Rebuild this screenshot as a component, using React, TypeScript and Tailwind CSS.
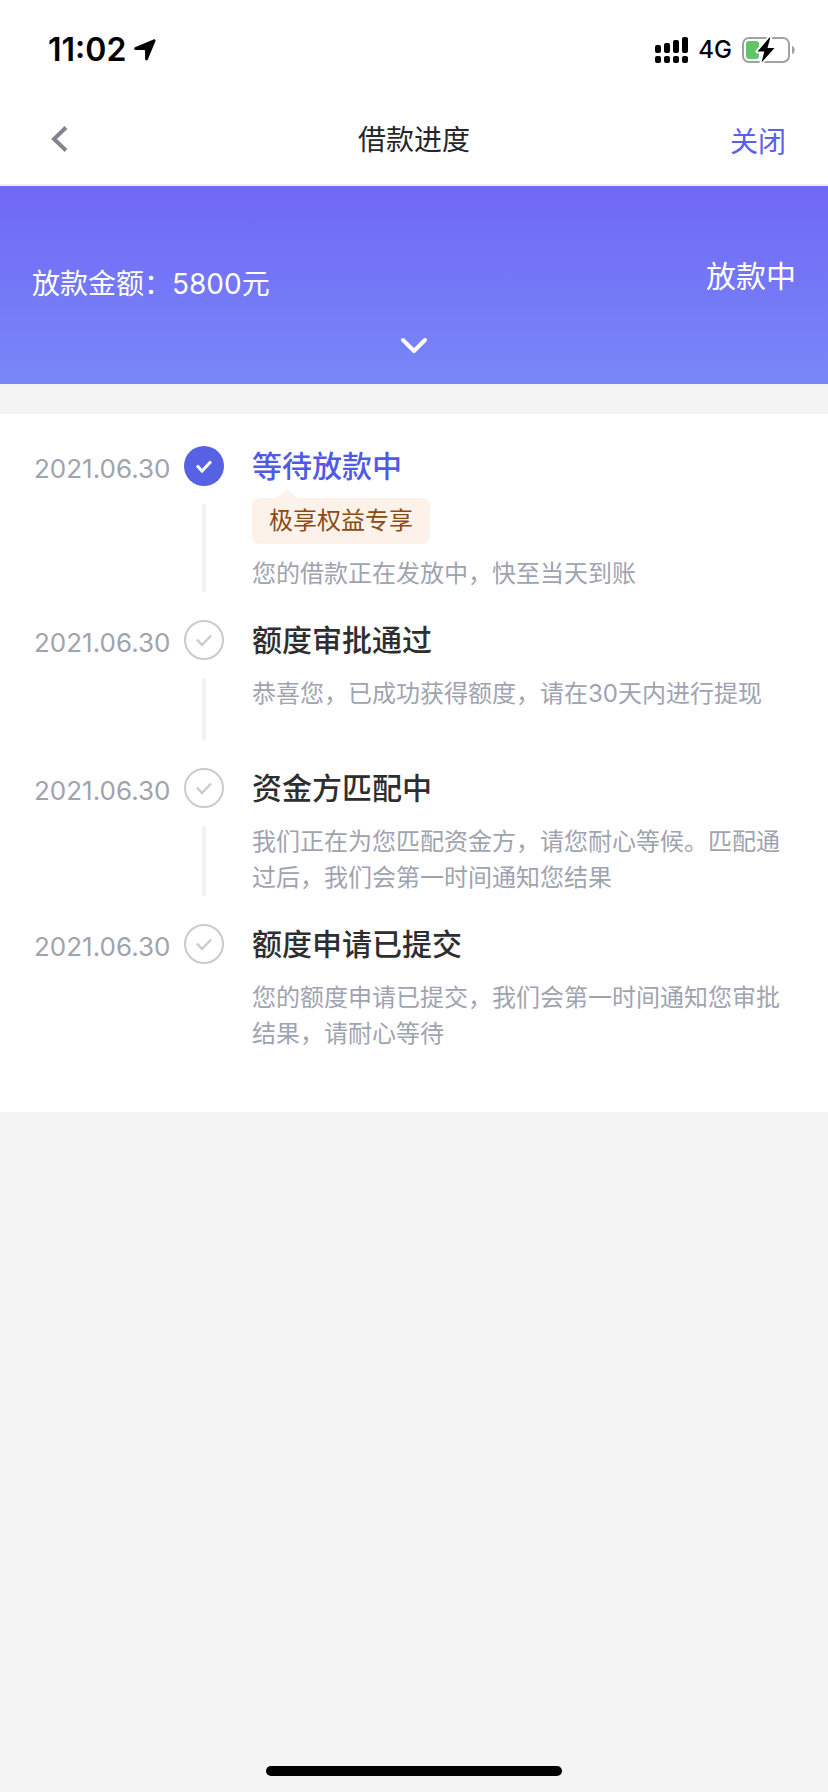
import clsx from 'clsx';

type Step = {
  date: string;
  title: string;
  text: string;
  tag?: string;
  active?: boolean;
};

const steps: Step[] = [
  {
    date: '2021.06.30',
    title: '等待放款中',
    tag: '极享权益专享',
    text: '您的借款正在发放中，快至当天到账',
    active: true
  },
  {
    date: '2021.06.30',
    title: '额度审批通过',
    text: '恭喜您，已成功获得额度，请在30天内进行提现'
  },
  {
    date: '2021.06.30',
    title: '资金方匹配中',
    text: '我们正在为您匹配资金方，请您耐心等候。匹配通过后，我们会第一时间通知您结果'
  },
  {
    date: '2021.06.30',
    title: '额度申请已提交',
    text: '您的额度申请已提交，我们会第一时间通知您审批结果，请耐心等待'
  }
];

function StatusBar() {
  return (
    <div className="flex h-24 items-center justify-between pt-1 pr-8 pl-12 text-black">
      <div className="flex items-center gap-2">
        <span className="text-[32px] leading-10 font-semibold">11:02</span>
        <svg width="22" height="22" viewBox="0 0 22 22" aria-hidden="true">
          <path
            d="M1 8.200 19.500.4c1.200-.5 2.400.6 1.900 1.900l-7.600 18.200c-.6 1.400-2.700 1.100-2.700-.5V11.800c0-.6-.3-.9-.9-.9H1.700C0 10.900-.4 8.800 1 8.200z"
            fill="#000"
          />
        </svg>
      </div>
      <div className="flex items-center gap-[10px]">
        <svg width="33" height="26" viewBox="0 0 33 26" aria-hidden="true">
          <rect x="0" y="8" width="6" height="8" rx="2" />
          <rect x="9" y="6" width="6" height="10" rx="2" />
          <rect x="18" y="3" width="6" height="13" rx="2" />
          <rect x="27" y="0" width="6" height="16" rx="2" />
          <rect x="0" y="19" width="6" height="7" rx="2" />
          <rect x="9" y="19" width="6" height="7" rx="2" />
          <rect x="18" y="19" width="6" height="7" rx="2" />
          <rect x="27" y="19" width="6" height="7" rx="2" />
        </svg>
        <span className="text-[24px] leading-8 font-medium">4G</span>
        <svg width="54" height="28" viewBox="0 0 54 28" aria-hidden="true">
          <rect x="1" y="2" width="46" height="24" rx="6" fill="none" stroke="#a1a1a1" strokeWidth="2" />
          <rect x="4" y="5" width="13" height="18" rx="3" fill="#62c466" />
          <path d="M50 10c3.600 1 3.600 7 0 8z" fill="#a1a1a1" />
          <path
            d="M27.500 1.500 15.500 15.500h6.800L19.500 26.500 32.500 12h-7l2.800-10.500z"
            fill="#000"
            stroke="#fff"
            strokeWidth="4"
            strokeLinejoin="round"
            paintOrder="stroke"
          />
        </svg>
      </div>
    </div>
  );
}

function NavBar() {
  return (
    <header className="grid h-[90px] grid-cols-3 items-center border-b-2 border-[#efefef] px-[42px]">
      <button type="button" aria-label="返回" className="justify-self-start pl-2">
        <svg width="18" height="28" viewBox="0 0 18 28" aria-hidden="true">
          <path d="M16 1.500 4 13l12 11.500" fill="none" stroke="#85838f" strokeWidth="4" />
        </svg>
      </button>
      <h1 className="justify-self-center text-[28px] leading-10 text-[#26262a]">借款进度</h1>
      <button type="button" className="justify-self-end pt-1 text-[28px] leading-10 text-[#5a60ec]">
        关闭
      </button>
    </header>
  );
}

function Summary() {
  return (
    <section className="flex flex-col items-center bg-linear-to-b from-[#7067f6] to-[#7887f7] px-8 pt-[70px] pb-5 text-white">
      <div className="flex w-full items-start justify-between">
        <p className="pt-2 text-[28px] leading-10">放款金额：5800元</p>
        <p className="text-[30px] leading-10">放款中</p>
      </div>
      <button type="button" aria-label="展开" className="mt-6">
        <svg className="block" width="28" height="36" viewBox="0 0 28 36" aria-hidden="true">
          <path
            d="m3 12 11 11 11-11"
            fill="none"
            stroke="#fff"
            strokeWidth="4"
            strokeLinecap="round"
            strokeLinejoin="round"
          />
        </svg>
      </button>
    </section>
  );
}

function StepIcon({ active }: { active?: boolean }) {
  return (
    <svg className="block shrink-0" width="40" height="40" viewBox="0 0 40 40" aria-hidden="true">
      <circle
        cx="20"
        cy="20"
        r={active ? 20 : 19}
        fill={active ? '#5661e3' : '#fff'}
        stroke={active ? 'none' : '#cbcbcd'}
        strokeWidth="2"
      />
      <path
        d="m13 19.500 5 5.500 9-9.500"
        fill="none"
        stroke={active ? '#fff' : '#cbcbcd'}
        strokeWidth={active ? 3 : 2.500}
      />
    </svg>
  );
}

function TimelineItem({ step, last }: { step: Step; last: boolean }) {
  return (
    <li className={clsx('flex', !last && 'min-h-[148px]')}>
      <time className="w-[150px] shrink-0 text-[26px] leading-[46px] text-[#a0a3b0]">{step.date}</time>
      <div className="flex w-10 shrink-0 flex-col items-center">
        <StepIcon active={step.active} />
        {!last && <span className="mt-[18px] mb-7 w-1 flex-1 rounded-full bg-[#f1f1f6]" />}
      </div>
      <div className={clsx('ml-7 flex-1', !last && 'pb-7')}>
        <h2
          className={clsx('text-[30px] leading-10 font-medium', step.active ? 'text-[#4f5ae6]' : 'text-[#2e2e30]')}
        >
          {step.title}
        </h2>
        {step.tag && (
          <div className="relative mt-3 w-fit rounded-lg bg-[#fdf2ea] px-[17px] text-[24px] leading-[46px] text-[#8a4a14]">
            <svg className="absolute -top-2 left-6" width="22" height="8" viewBox="0 0 22 8" aria-hidden="true">
              <path d="M0 8 9.500.8q1.500-1 3 0L22 8z" fill="#fdf2ea" />
            </svg>
            {step.tag}
          </div>
        )}
        <p className={clsx('text-[24px] leading-9 text-[#a0a3b0]', step.tag ? 'mt-3' : 'mt-4')}>{step.text}</p>
      </div>
    </li>
  );
}

export default function App() {
  return (
    <div
      lang="zh-CN"
      className="flex min-h-screen flex-col bg-[#f4f4f4] font-['Inter','Noto_Sans_CJK_SC',sans-serif]"
    >
      <div className="bg-white">
        <StatusBar />
        <NavBar />
      </div>
      <main>
        <Summary />
        <ol className="mt-[30px] bg-white pt-8 pr-9 pb-[60px] pl-[34px]">
          {steps.map((step, i) => (
            <TimelineItem key={step.title} step={step} last={i === steps.length - 1} />
          ))}
        </ol>
      </main>
      <div className="mt-auto flex justify-center pt-8 pb-4">
        <div className="h-[10px] w-[296px] rounded-full bg-black" />
      </div>
    </div>
  );
}
